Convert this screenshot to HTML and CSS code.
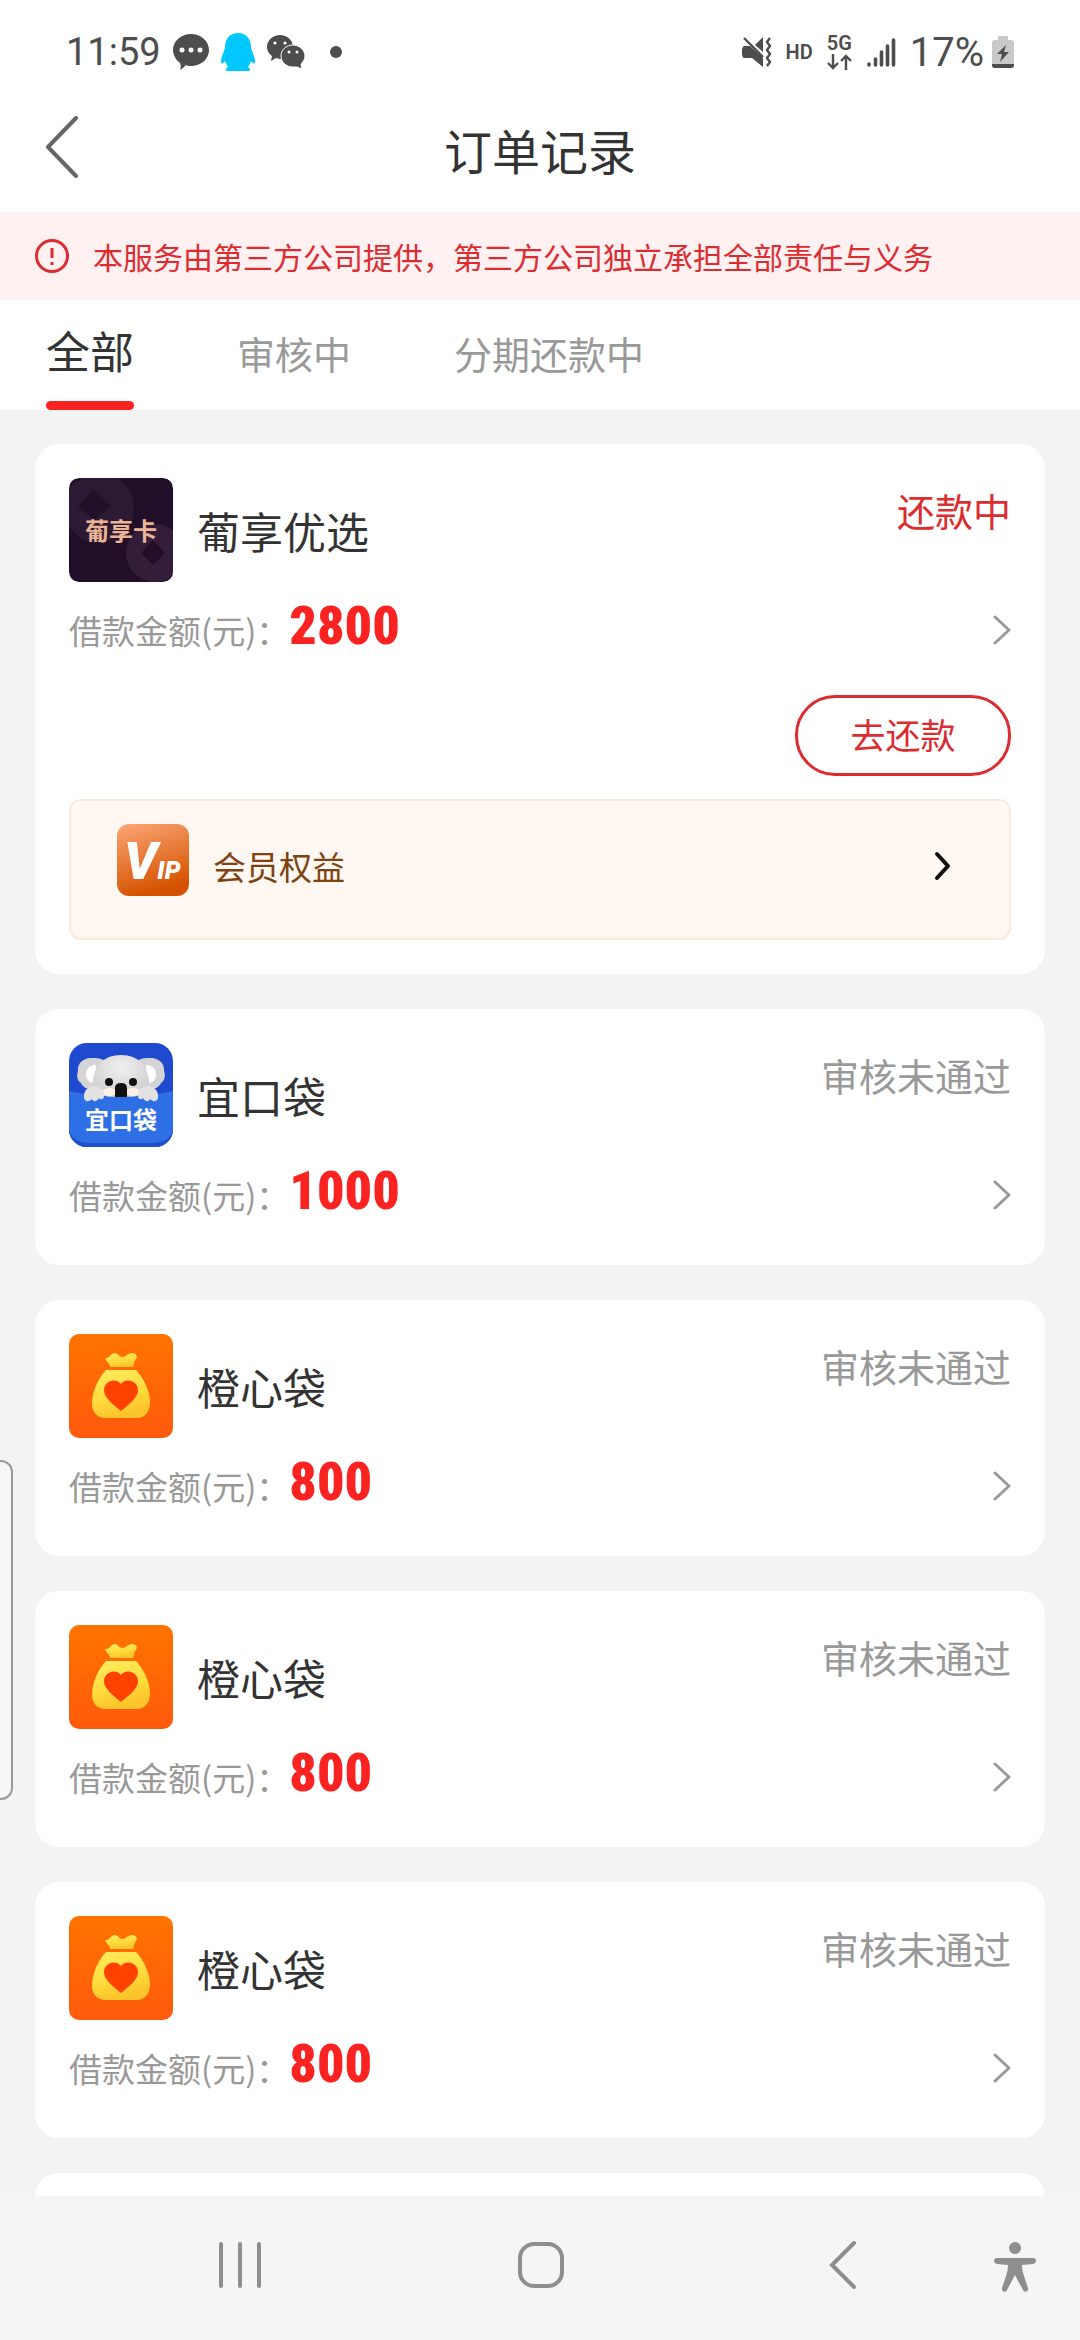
FILE: index.html
```html
<!DOCTYPE html>
<html lang="zh-CN">
  <head>
    <meta charset="UTF-8" />
    <meta name="viewport" content="width=device-width, initial-scale=1.0" />
    <title>订单记录</title>
    <link rel="stylesheet" href="styles.css">
  </head>
  <body>
    <!-- shared shapes -->
    <svg class="defs" width="0" height="0" aria-hidden="true">
      <defs>
        <linearGradient id="orangeBg" x1="0" y1="0" x2="0" y2="1">
          <stop offset="0" stop-color="#ff7400" />
          <stop offset="1" stop-color="#ff5a0c" />
        </linearGradient>
        <linearGradient id="bagFill" x1="0" y1="0" x2="0.3" y2="1">
          <stop offset="0" stop-color="#ffec60" />
          <stop offset="0.6" stop-color="#ffdc3c" />
          <stop offset="1" stop-color="#fbc42a" />
        </linearGradient>
        <symbol id="bag" viewBox="0 0 104 104">
          <rect width="104" height="104" rx="10" fill="url(#orangeBg)" />
          <path d="M36 24c4 1 6-5 10-5 3 0 4 4 7 4 4 0 6-4 10-4 4 0 6 3 4 6-2 2-2 5-3 8H41c0-4-4-5-5-9z" fill="url(#bagFill)" />
          <path d="M37 36h30c7 7 14 21 14 32 0 10-5 16-14 16H37c-9 0-14-6-14-14 0-13 7-27 14-34z" fill="url(#bagFill)" />
          <path d="M52 77C44 70 35 64 35 56c0-9 12-13 17-6 5-7 17-3 17 6 0 8-9 14-17 21z" fill="#ff4200" />
        </symbol>
        <symbol id="arrow" viewBox="0 0 18 30">
          <path d="M2 2l14 13L2 28" fill="none" stroke="#999" stroke-width="3" stroke-linecap="round" stroke-linejoin="round" />
        </symbol>
      </defs>
    </svg>

    <div class="app">
      <div class="status-bar">
        <div class="status-left">
          <span class="time">11:59</span>
          <svg width="36" height="36" viewBox="0 0 36 36">
            <path d="M18 0c10 0 18 7 18 16s-8 16-18 16c-2 0-4 0-5-1-2 2-4 4-6 5 1-3 1-5 0-7-4-3-7-8-7-13C0 7 8 0 18 0z" fill="#4d4d4d" />
            <g fill="#fff"><circle cx="9" cy="16" r="2.5" /><circle cx="18" cy="16" r="2.5" /><circle cx="27" cy="16" r="2.5" /></g>
          </svg>
          <svg width="34" height="38" viewBox="0 0 34 38">
            <path d="M17 0c8 0 13 6 13 14 0 3 4 9 4 15 0 2-2 2-4-1-1 3-2 4-3 6 2 1 3 4 1 4H6c-2 0-1-3 1-4-1-2-2-3-3-6-2 3-4 3-4 1 0-6 4-12 4-15C4 6 9 0 17 0z" fill="#00c8ff" />
          </svg>
          <svg width="38" height="34" viewBox="0 0 38 34">
            <path d="M13 0c7 0 13 5 13 12s-6 12-13 12l-4-1-5 3 1-5c-3-2-5-5-5-9C0 5 6 0 13 0z" fill="#4d4d4d" />
            <path d="M26 10c6 0 12 5 12 11 0 3-2 6-4 8l1 5-5-2h-4c-7 0-12-5-12-11s5-11 12-11z" fill="#4d4d4d" stroke="#fff" stroke-width="1" />
            <g fill="#fff"><circle cx="8" cy="8" r="1.6" /><circle cx="18" cy="8" r="1.6" /><circle cx="22" cy="17" r="1.5" /><circle cx="30" cy="17" r="1.5" /></g>
          </svg>
          <span class="dot"></span>
        </div>
        <div class="status-right">
          <svg width="30" height="30" viewBox="0 0 30 30">
            <path d="M2 9h6l13 12v9L10 21H2c-3-1-3-11 0-12zM13 8l8-8v15z" fill="#4d4d4d" />
            <path d="M2 1l19 19" stroke="#4d4d4d" stroke-width="2.4" fill="none" />
            <path d="M28 1l-3 4 3 4-3 4 3 4-3 4 3 4-3 4" stroke="#4d4d4d" stroke-width="2.4" fill="none" stroke-linejoin="round" />
          </svg>
          <span class="hd">HD</span>
          <span class="network">5G
            <svg width="26" height="16" viewBox="0 0 26 16">
              <path d="M6 0v14M1 9l5 5 5-5M19 16V2M14 7l5-5 5 5" stroke="#4d4d4d" stroke-width="2.4" fill="none" />
            </svg>
          </span>
          <svg width="29" height="30" viewBox="0 0 29 30">
            <path d="M2 27v1M8.500 22v6M14.500 15v13M20.500 9v19M26.500 3v25" stroke="#4d4d4d" stroke-width="3.600" stroke-linecap="round" />
          </svg>
          <span class="percent">17%</span>
          <svg width="22" height="32" viewBox="0 0 22 32">
            <path d="M6 0h10v4h3q3 0 3 3v22q0 3-3 3H3q-3 0-3-3V7q0-3 3-3h3z" fill="#c9c9c9" />
            <path d="M0 28h22v1q0 3-3 3H3q-3 0-3-3z" fill="#4d4d4d" />
            <path d="M14 9L5 18h5l-2 8 9-10h-5z" fill="#4d4d4d" />
          </svg>
        </div>
      </div>

      <header class="header">
        <button class="back" aria-label="返回">
          <svg width="32" height="62" viewBox="0 0 32 62">
            <path d="M30 2L2 31l28 29" fill="none" stroke="#666" stroke-width="4" stroke-linecap="round" stroke-linejoin="round" />
          </svg>
        </button>
        <h1>订单记录</h1>
      </header>

      <div class="notice">
        <svg width="34" height="34" viewBox="0 0 34 34">
          <circle cx="17" cy="17" r="15.500" fill="none" stroke="#dd2c30" stroke-width="3" />
          <path d="M17 9v10M17 23v3" stroke="#dd2c30" stroke-width="3" />
        </svg>
        <span>本服务由第三方公司提供，第三方公司独立承担全部责任与义务</span>
      </div>

      <nav class="tabs">
        <a href="#all" class="tab active">全部</a>
        <a href="#review" class="tab">审核中</a>
        <a href="#repay" class="tab">分期还款中</a>
      </nav>

      <main class="orders">
        <section class="card">
          <div class="card-head">
            <svg class="logo" viewBox="0 0 104 104">
              <rect width="104" height="104" rx="10" fill="#210f29" />
              <circle cx="30" cy="30" r="35" fill="#2c1933" />
              <circle cx="86" cy="75" r="29" fill="#341d39" />
              <path d="M25 12l17 16-17 14L9 28zM84 62l12 13-12 12-12-12z" fill="#210f29" />
              <path d="M0 0H10Q0 0 0 10zM104 0v10q0-10-10-10zM104 104H94q10 0 10-10zM0 104V94q0 10 10 10z" fill="#fff" />
              <text x="52" y="62" class="logo-text gold">葡享卡</text>
            </svg>
            <h2>葡享优选</h2>
            <span class="state repaying">还款中</span>
          </div>
          <div class="card-row">
            <span class="label">借款金额(元)：</span>
            <strong class="amount">2800</strong>
            <svg class="arrow"><use href="#arrow" /></svg>
          </div>
          <div class="actions">
            <button class="repay">去还款</button>
          </div>
          <a href="#vip" class="vip">
            <svg class="vip-logo" viewBox="0 0 72 72">
              <defs>
                <linearGradient id="vipBg" x1="0" y1="0" x2="0.3" y2="1">
                  <stop offset="0" stop-color="#fba676" />
                  <stop offset="1" stop-color="#d55300" />
                </linearGradient>
              </defs>
              <rect width="72" height="72" rx="12" fill="url(#vipBg)" />
              <text x="7" y="55" class="vip-text">V<tspan class="vip-small">IP</tspan></text>
            </svg>
            <span>会员权益</span>
            <svg class="vip-arrow" width="18" height="30" viewBox="0 0 18 30">
              <path d="M3 3l11 12L3 27" fill="none" stroke="#111" stroke-width="4" stroke-linecap="round" stroke-linejoin="round" />
            </svg>
          </a>
        </section>

        <section class="card">
          <div class="card-head">
            <svg class="logo" viewBox="0 0 104 104">
              <defs>
                <clipPath id="koalaClip"><rect width="104" height="104" rx="18" /></clipPath>
                <radialGradient id="fur" cx="0.5" cy="0.3" r="0.8">
                  <stop offset="0" stop-color="#f0f0f0" />
                  <stop offset="1" stop-color="#c8c8ca" />
                </radialGradient>
              </defs>
              <g clip-path="url(#koalaClip)">
                <rect width="104" height="104" fill="#1f4ad0" />
                <path d="M24 15c-10-1-16 6-15 13-2 6 0 10 3 12 2 5 8 7 14 6l12-26c-3-4-8-5-14-5zM80 15c10-1 16 6 15 13 2 6 0 10-3 12-2 5-8 7-14 6L66 20c3-4 8-5 14-5z" fill="#d4d4d6" />
                <path d="M27 22c-9 0-12 8-9 14 2 4 6 5 8 2zM77 22c9 0 12 8 9 14-2 4-6 5-8 2z" fill="#fff" />
                <path d="M52 12c18 0 27 12 28 26 0 11-8 17-28 17s-28-6-28-17c1-14 10-26 28-26z" fill="url(#fur)" />
                <ellipse cx="40" cy="49" rx="7" ry="4" fill="#fff0e4" />
                <ellipse cx="64" cy="49" rx="7" ry="4" fill="#fff0e4" />
                <path d="M0 48q52 12 104 0v56H0z" fill="#2f6fe6" />
                <circle cx="40" cy="39" r="4" fill="#111" />
                <circle cx="64" cy="39" r="4" fill="#111" />
                <path d="M46 54V45q0-5 6-5t6 5v9z" fill="#111" />
                <path d="M15 55c-1-8 5-12 10-12s11 4 10 10c0 4-4 4-5 2-2 4-6 4-7 1-3 3-7 3-8-1zM69 53c-1-6 5-10 10-10s11 4 10 12c-1 4-5 4-8 1-1 3-5 3-7-1-1 2-5 2-5-2z" fill="#e2e2e4" />
                <path d="M0 88q4 12 22 12h60q18 0 22-12v16H0z" fill="#1f4fcb" />
              </g>
              <text x="52" y="86" class="logo-text white">宜口袋</text>
            </svg>
            <h2>宜口袋</h2>
            <span class="state">审核未通过</span>
          </div>
          <div class="card-row">
            <span class="label">借款金额(元)：</span>
            <strong class="amount">1000</strong>
            <svg class="arrow"><use href="#arrow" /></svg>
          </div>
        </section>

        <section class="card">
          <div class="card-head">
            <svg class="logo"><use href="#bag" /></svg>
            <h2>橙心袋</h2>
            <span class="state">审核未通过</span>
          </div>
          <div class="card-row">
            <span class="label">借款金额(元)：</span>
            <strong class="amount">800</strong>
            <svg class="arrow"><use href="#arrow" /></svg>
          </div>
        </section>

        <section class="card">
          <div class="card-head">
            <svg class="logo"><use href="#bag" /></svg>
            <h2>橙心袋</h2>
            <span class="state">审核未通过</span>
          </div>
          <div class="card-row">
            <span class="label">借款金额(元)：</span>
            <strong class="amount">800</strong>
            <svg class="arrow"><use href="#arrow" /></svg>
          </div>
        </section>

        <section class="card">
          <div class="card-head">
            <svg class="logo"><use href="#bag" /></svg>
            <h2>橙心袋</h2>
            <span class="state">审核未通过</span>
          </div>
          <div class="card-row">
            <span class="label">借款金额(元)：</span>
            <strong class="amount">800</strong>
            <svg class="arrow"><use href="#arrow" /></svg>
          </div>
        </section>

        <section class="card"></section>
      </main>

      <div class="edge-handle"></div>

      <footer class="sys-nav">
        <button aria-label="最近任务">
          <svg width="42" height="46" viewBox="0 0 42 46">
            <path d="M2 2v42M21 2v42M40 2v42" stroke="#8e8e8e" stroke-width="4" stroke-linecap="round" />
          </svg>
        </button>
        <button aria-label="主屏幕">
          <svg width="46" height="46" viewBox="0 0 46 46">
            <rect x="2" y="2" width="42" height="42" rx="14" fill="none" stroke="#8e8e8e" stroke-width="4" />
          </svg>
        </button>
        <button aria-label="返回上一页">
          <svg width="28" height="48" viewBox="0 0 28 48">
            <path d="M25 2L3 24l22 22" fill="none" stroke="#8e8e8e" stroke-width="4" stroke-linecap="round" />
          </svg>
        </button>
        <button aria-label="辅助功能">
          <svg width="42" height="54" viewBox="0 0 42 54">
            <circle cx="21" cy="10" r="6" fill="#8e8e8e" />
            <path d="M3 20h36c4 0 4 5 0 6l-11 1c0 4 1 8 2 11l4 12c1 4-4 5-5 2l-8-15-8 15c-1 3-6 2-5-2l4-12c1-3 2-7 2-11L3 26c-4-1-4-6 0-6z" fill="#8e8e8e" />
          </svg>
        </button>
      </footer>
    </div>
  </body>
</html>
```
FILE: styles.css
```css
* {
  box-sizing: border-box;
}
body {
  margin: 0;
  font-family: "Noto Sans CJK SC", sans-serif;
  color: #333;
  background-color: #fff;
}
button {
  padding: 0;
  border: none;
  background: none;
  font-family: inherit;
  cursor: pointer;
}
a {
  color: inherit;
  text-decoration: none;
}
h1, h2 {
  margin: 0;
  font-weight: 400;
}
svg {
  display: block;
  flex-shrink: 0;
}
.defs {
  position: absolute;
}
.app {
  position: relative;
  display: flex;
  flex-direction: column;
  height: 100vh;
}

/* status bar */
.status-bar {
  display: flex;
  justify-content: space-between;
  align-items: center;
  height: 104px;
  padding: 0 66px;
  font-family: Roboto, sans-serif;
  color: #4d4d4d;
}
.status-left,
.status-right {
  display: flex;
  align-items: center;
}
.status-left { gap: 12px; }
.status-right { gap: 14px; }
.time { font-size: 38px; }
.percent {
  margin-right: -6px;
  font-size: 40px;
}
.dot {
  width: 12px;
  height: 12px;
  margin-left: 13px;
  border-radius: 50%;
  background-color: #4d4d4d;
}
.hd {
  font-size: 20px;
  font-weight: 600;
}
.network {
  display: flex;
  flex-direction: column;
  gap: 2px;
  font-size: 20px;
  font-weight: 600;
  line-height: 18px;
}

/* title */
.header {
  display: grid;
  grid-template-columns: 1fr auto 1fr;
  align-items: center;
  height: 108px;
  padding: 0 46px 18px;
}
.back {
  justify-self: start;
  padding-bottom: 4px;
}
.header h1 {
  font-size: 48px;
  line-height: 64px;
}

.notice {
  display: flex;
  align-items: center;
  gap: 24px;
  height: 88px;
  padding: 0 35px;
  font-size: 30px;
  color: #dd2c30;
  background-color: #fff0f1;
}

/* tabs */
.tabs {
  display: flex;
  align-items: baseline;
  gap: 103px;
  height: 110px;
  padding: 0 46px;
}
.tab {
  font-size: 38px;
  line-height: 101px;
  color: #999;
}
.tab.active {
  font-size: 44px;
  color: #333;
}
.tab.active::after {
  content: "";
  display: block;
  height: 9px;
  border-radius: 5px;
  background-color: #fb2222;
}

/* order list */
.orders {
  flex: 1;
  min-height: 0;
  overflow: hidden;
  display: flex;
  flex-direction: column;
  gap: 35px;
  padding: 34px 35px;
  background-color: #f3f3f3;
}
.card {
  flex-shrink: 0;
  min-height: 256px;
  padding: 34px;
  border-radius: 24px;
  background-color: #fff;
}
.card-head {
  display: flex;
  align-items: center;
  gap: 24px;
}
.logo {
  width: 104px;
  height: 104px;
}
.logo-text {
  font-size: 24px;
  font-weight: 700;
  text-anchor: middle;
}
.gold { fill: #ebb595; }
.white { fill: #fff; }
.card-head h2 {
  flex: 1;
  font-size: 43px;
}
.state {
  align-self: flex-start;
  font-size: 38px;
  line-height: 64px;
  color: #999;
}
.repaying { color: #dd2c30; }
.card-row {
  display: flex;
  align-items: baseline;
  height: 68px;
  margin-top: 14px;
  line-height: 60px;
}
.label {
  font-size: 33px;
  color: #999;
}
.amount {
  font-family: "Roboto Condensed", Roboto, sans-serif;
  font-size: 54px;
  font-weight: 900;
  color: #fb2222;
}
.arrow {
  align-self: center;
  width: 18px;
  height: 30px;
  margin-left: auto;
}
.actions {
  display: flex;
  justify-content: flex-end;
  margin: 31px 0 23px;
}
.repay {
  width: 216px;
  height: 81px;
  padding-bottom: 4px;
  border: 3px solid #dd2c30;
  border-radius: 40px;
  font-size: 35px;
  color: #dd2c30;
}
.vip {
  display: flex;
  align-items: center;
  gap: 24px;
  height: 141px;
  padding: 0 57px 8px 46px;
  border: 2px solid #f9eadf;
  border-radius: 12px;
  font-size: 33px;
  color: #7d4311;
  background-color: #fff8f2;
}
.vip-logo {
  width: 72px;
  height: 72px;
  margin-bottom: 12px;
}
.vip-text {
  font-family: Roboto, sans-serif;
  font-size: 52px;
  font-style: italic;
  font-weight: 900;
  fill: #fff;
}
.vip-small { font-size: 25px; }
.vip-arrow { margin-left: auto; }

/* edge panel grip on the left side */
.edge-handle {
  position: absolute;
  top: 1460px;
  left: 0;
  width: 13px;
  height: 340px;
  border: 2px solid #999;
  border-left: none;
  border-radius: 0 12px 12px 0;
  background-color: #f7f7f7;
}

/* system navigation */
.sys-nav {
  display: grid;
  grid-template-columns: repeat(3, 1fr) 42px;
  align-items: center;
  justify-items: center;
  height: 144px;
  padding: 0 44px 6px 89px;
  background-color: #f5f5f8;
}
```
